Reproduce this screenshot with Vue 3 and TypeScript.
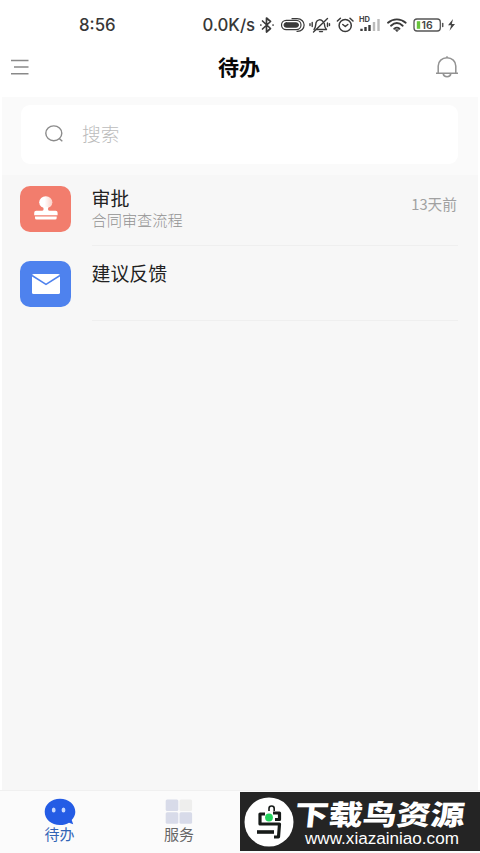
<script setup lang="ts">
interface Todo {
  id: number
  kind: 'stamp' | 'mail'
  title: string
  detail?: string
  time?: string
}

const todos: Todo[] = [
  { id: 1, kind: 'stamp', title: '审批', detail: '合同审查流程', time: '13天前' },
  { id: 2, kind: 'mail', title: '建议反馈' },
]
</script>

<template>
  <div class="screen">
    <header class="status">
      <span class="clock">8:56</span>
      <span class="speed">0.0K/s</span>
      <svg class="status-icons" width="200" height="24" viewBox="0 0 200 24" fill="none" stroke="#3a3a3a" stroke-width="1.5" stroke-linecap="round" stroke-linejoin="round">
        <path d="m4.500 8 8 7.500-4 3.500V5l4 3.500-8 7.500M2.800 12h.1M15 12h.1" stroke-width="1.700" />
        <path d="M39 18.300c9.500.3 9.500-12.600 0-12.600h-5" stroke-width="1.200" />
        <rect x="23.500" y="7.300" width="19.500" height="9.400" rx="4.700" stroke-width="1.200" />
        <rect x="26" y="9.800" width="14.500" height="4.400" rx="2.200" fill="#3a3a3a" stroke-width="1" />
        <path d="M56 16.500c2-2 1.500-5 2.100-7 1-3.200 4.800-3.400 6.600-1.300M66.300 10.500c.1 2.700.7 4.500 2.200 6H59M61.500 18.600h3M69.500 5.500 55.500 19M54.200 9.500v4M52 10.700v1.800M69.500 10v3.500M71.500 10.700v1.800" stroke-width="1.400" />
        <circle cx="87.200" cy="12.500" r="6.100" />
        <path d="m84.800 11.500 2.500 2 2.500-2M79.400 8l3-2.800M92 5.200 95 8" />
        <text class="hd" x="101" y="9">HD</text>
        <path d="M103.500 18v-2.300M107.500 18v-4M111.500 18v-6" stroke-width="2.400" stroke-linecap="butt" />
        <path d="M116 18V9M120.500 18V6" stroke="#bbb" stroke-width="2.400" stroke-linecap="butt" />
        <path d="M130 9.700c5.200-4.500 12.500-4.500 17.700 0M133 12.700c3.600-3.200 8.100-3.200 11.700 0M136.200 15.700c1.800-1.400 3.600-1.400 5.300 0" stroke-width="1.900" />
        <path d="m138.800 18.500-1.500-1.800h3Z" fill="#3a3a3a" stroke-width=".7" />
        <rect x="156" y="6" width="26.300" height="12" rx="3" stroke="#555" stroke-width="1.300" />
        <path d="M160.500 8.200v7.600" stroke="#68c43c" stroke-width="3.400" stroke-linecap="butt" />
        <path d="M184.700 10.500v3" stroke="#555" />
        <text class="charge" x="163.600" y="15.700">16</text>
        <path d="m195 6-5 6.300h3.200l-1.700 5.500 5.500-6.700h-3.200Z" fill="#444" stroke="none" />
      </svg>
    </header>
    <nav class="topbar">
      <svg width="20" height="20" viewBox="0 0 20 20" fill="none" stroke="#898989" stroke-width="1.400"><path d="M1 3.500h17.500M4 10h14.500M1 16.700h17.500" /></svg>
      <h1>待办</h1>
      <svg width="24" height="24" viewBox="0 0 24 24" fill="none" stroke="#929292" stroke-width="1.500"><path d="M1 18.300h22M3.200 18V11C3.200 6.300 7 2.800 12 2.800S20.800 6.300 20.800 11V18M12 2.800V1.300M8.200 18.600c.5 4.100 7.200 4.100 7.600 0" /></svg>
    </nav>
    <main>
      <section class="search-area">
        <label class="search">
          <svg width="20" height="20" viewBox="0 0 20 20" fill="none" stroke="#8b8b8b" stroke-width="1.400"><ellipse cx="9.800" cy="9.300" rx="8" ry="7.400" /><path d="m15.200 14.500 3.100 2.800" /></svg>
          <span>搜索</span>
        </label>
      </section>
      <ul class="todos">
        <li v-for="todo in todos" :key="todo.id" class="todo">
          <span class="badge" :class="todo.kind">
            <svg v-if="todo.kind === 'stamp'" width="26" height="26" viewBox="0 0 26 26" fill="#fff">
              <defs>
                <linearGradient id="stampShade" x1="0" x2="1"><stop offset=".4" stop-color="#fff" /><stop offset="1" stop-color="#fcd0c7" /></linearGradient>
              </defs>
              <ellipse cx="12.800" cy="7.300" rx="6.600" ry="6" fill="url(#stampShade)" />
              <path d="M10.500 12h4.600v2.700q.1 1 1.500 1h6q2 0 2 2v2.500H1.200v-2.500q0-2 2-2h5.800q1.400 0 1.500-1ZM2 21.600h21.700V23q0 1.600-1.600 1.600H3.600Q2 24.600 2 23Z" />
            </svg>
            <svg v-else width="30" height="22" viewBox="0 0 30 22"><rect x="1" y="1" width="28" height="20" rx="1.600" fill="#fff" /><path d="m1 2.500 14 8.800 14-8.800" fill="none" stroke="#4e82ee" stroke-width="1.500" /></svg>
          </span>
          <div class="content">
            <div class="summary">
              <h2>{{ todo.title }}</h2>
              <p v-if="todo.detail">{{ todo.detail }}</p>
            </div>
            <time v-if="todo.time">{{ todo.time }}</time>
          </div>
        </li>
      </ul>
    </main>
    <footer class="tabs">
      <div class="tab active">
        <svg width="32" height="28" viewBox="0 0 32 28"><path d="M16 .7C7.300.7.7 6.300.7 13.700S7.300 27 16 27c3.500 0 6.500-.8 9-2.300l4.200 1.600-1.500-4.400c2.100-2.200 3.600-4.900 3.600-7.900C31.300 6.300 24.600.7 16 .7Z" fill="#245ce5" /><ellipse cx="9.700" cy="12" rx="1.900" ry="2.500" fill="#c7d8fd" /><ellipse cx="19.500" cy="12" rx="1.900" ry="2.500" fill="#c7d8fd" /></svg>
        <span>待办</span>
      </div>
      <div class="tab">
        <svg width="28" height="28" viewBox="0 0 28 28" fill="#d8dbe9"><rect x=".7" y="1.500" width="12.600" height="11.500" rx="1.500" /><rect x="14.500" y="1.500" width="12.600" height="11.500" rx="1.500" fill="#eeeeed" /><rect x=".7" y="14.200" width="12.600" height="11.500" rx="1.500" /><rect x="14.500" y="14.200" width="12.600" height="11.500" rx="1.500" /></svg>
        <span>服务</span>
      </div>
      <aside class="promo">
        <svg class="bird" width="50" height="50" viewBox="0 0 50 50">
          <circle cx="25" cy="25" r="24.500" fill="#fff" />
          <g fill="none" stroke="#171b19" stroke-linejoin="round">
            <path d="M25 14v-2.500q0-2.500 2.600-2.500t2.600 2.500V14" stroke-width="1.600" />
            <path d="M21 17h-5v10h19.500l-1 13h-4.500M29 16h6.500v6.500H31" stroke-width="3.200" />
            <path d="M13 35h17" stroke-width="3.600" />
          </g>
          <circle cx="25" cy="20.500" r="3.900" fill="#22d45d" />
        </svg>
        <div class="promo-text">
          <strong>下载鸟资源</strong>
          <span>www.xiazainiao.com</span>
        </div>
      </aside>
    </footer>
  </div>
</template>

<style>
body { background: #fff; }
</style>

<style scoped>
* { box-sizing: border-box; }
.screen { width: 480px; height: 853px; display: flex; flex-direction: column; overflow: hidden; background: #fff; font-family: "Noto Sans", "Noto Sans CJK SC", sans-serif; }
h1, h2, p, ul { margin: 0; padding: 0; }
svg { display: block; flex: none; }
.status { height: 50px; display: flex; align-items: center; padding-left: 79px; font: 500 16.800px Inter, sans-serif; color: #373737; }
.clock { width: 123.500px; }
.speed { width: 55.500px; white-space: nowrap; }
.hd { font: 700 7.500px Inter, sans-serif; fill: #444; stroke: none; }
.charge { font: 600 10.500px Inter, sans-serif; fill: #444; stroke: none; }
.topbar { height: 47px; display: flex; justify-content: space-between; align-items: flex-start; padding: 5px 21px 0 10px; }
.topbar > svg:first-child { margin-top: 2px; }
h1 { width: 44px; margin-left: 15px; margin-top: -2px; font: 700 21px/26px "Noto Sans CJK SC", sans-serif; color: #080808; white-space: nowrap; }
main { flex: 1; margin: 0 2px; background: #f7f7f7; }
.search-area { height: 78px; padding: 8px 20px 11px 19px; background: #fafafa; }
.search { height: 59px; border-radius: 9px; background: #fff; display: flex; align-items: center; gap: 18px; padding: 0 0 1px 23px; color: #bcbcbc; font: 300 18.700px/24px "Noto Sans CJK SC", sans-serif; }
.search span { padding-bottom: 2px; }
.todos { list-style: none; padding: 0 20px 0 18px; }
.todo { height: 75px; display: flex; padding-top: 11px; gap: 20.500px; }
.badge { width: 51px; height: 46px; border-radius: 10px; display: grid; place-items: center; flex: none; }
.stamp { background: #f27d6d; padding-bottom: 3px; }
.mail { background: #4e82ee; }
.content { flex: 1; height: 60px; display: flex; justify-content: space-between; border-bottom: 1.500px solid #efefef; font-family: "Noto Sans CJK SC", sans-serif; }
.summary { display: flex; flex-direction: column; }
h2 { font-size: 18.900px; line-height: 24px; font-weight: 400; color: #222; }
p { font-size: 15.200px; line-height: 18px; color: #929292; font-weight: 300; }
time { font-size: 14.700px; line-height: 20px; padding: 8px 1px 0 0; color: #a1a1a1; }
.tabs { height: 63px; display: flex; background: #fbfbfb; border-top: 1.500px solid #f0f0f0; }
.tab { width: 120px; display: flex; flex-direction: column; align-items: center; padding: 7px 2px 0 0; font: 400 15px/16px "Noto Sans CJK SC", sans-serif; color: #666; }
.tab.active { padding-right: 1px; color: #3264b6; }
.promo { width: 240px; height: 59px; margin-top: 1px; padding-left: 4px; background: #242424; display: flex; align-items: center; gap: 1px; color: #fff; }
.promo-text { display: flex; flex-direction: column; align-items: flex-start; }
strong { font: 900 34px/34px "Noto Sans CJK SC", sans-serif; transform: translateY(2px) skewX(-6deg) scaleY(.82); white-space: nowrap; }
.promo-text span { padding-left: 10px; font: 400 17.100px/20px "Liberation Sans", Arial, sans-serif; }
</style>
